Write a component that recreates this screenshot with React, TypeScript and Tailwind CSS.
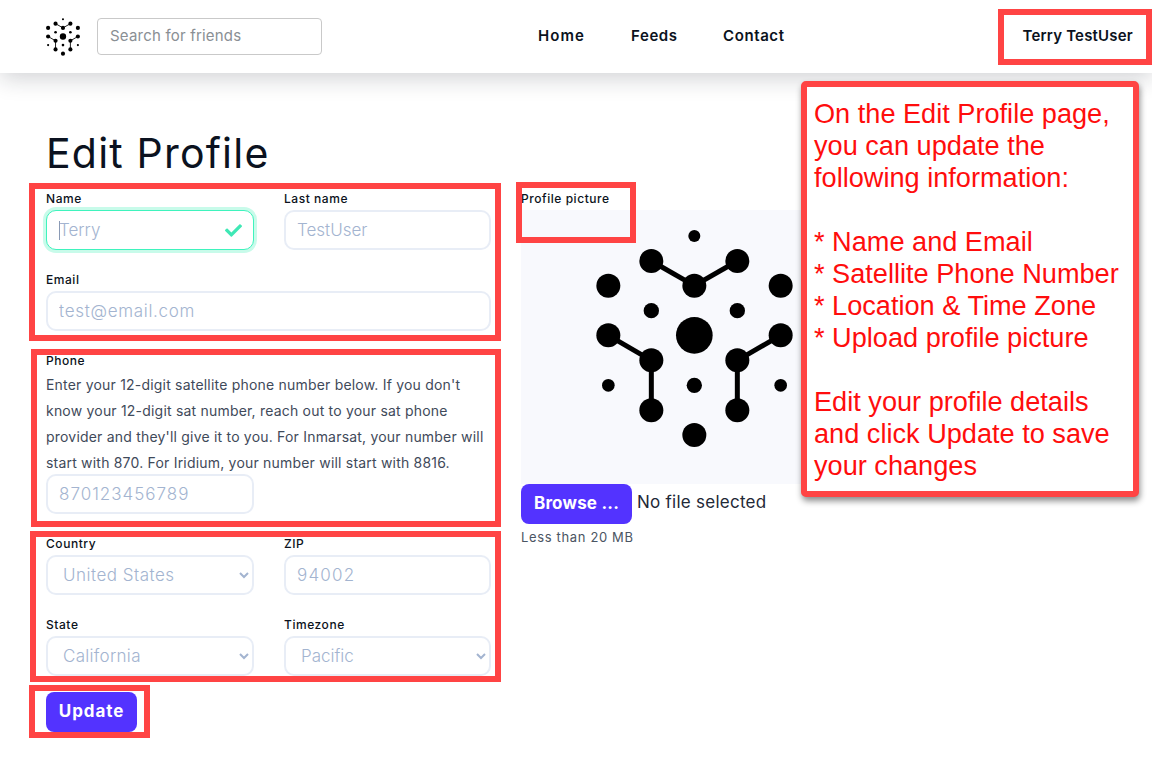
import { FaCheck } from 'react-icons/fa';

const FONT = 'font-["Inter",sans-serif]';
const fieldClass =
  'h-10 w-full rounded-[10px] border-2 border-[#e8edf6] bg-white px-[11px] text-[17px] font-light outline-none placeholder:text-[#a3b4d0]';
const selectClass =
  'h-10 w-full rounded-[10px] border-2 border-[#e8edf6] bg-white pl-[11px] pr-0 text-[17px] font-light text-[#a3b4d0] outline-none';
const labelClass = 'block h-[18px] text-[12px] font-medium leading-[14px] tracking-[0.55px] text-[#0b1220]';

const dots: [number, number, number][] = [
  [553, 183, 18], [424, 258, 36], [682, 258, 36], [553, 332, 36], [295, 332, 36], [812, 332, 36],
  [424, 407, 23], [682, 407, 23], [553, 481, 55], [295, 481, 36], [812, 481, 36], [424, 556, 36],
  [682, 556, 36], [295, 631, 19], [553, 631, 23], [812, 631, 19], [424, 706, 36], [682, 706, 36],
  [553, 780, 36],
];
const links: [number, number, number, number][] = [
  [424, 258, 553, 332], [682, 258, 553, 332], [295, 481, 424, 556], [812, 481, 682, 556],
  [424, 556, 424, 706], [682, 556, 682, 706],
];

function Logo({ viewBox, className }: { viewBox: string; className: string }) {
  return (
    <svg viewBox={viewBox} className={className} fill="#000">
      {links.map(([x1, y1, x2, y2], i) => (
        <line key={i} x1={x1} y1={y1} x2={x2} y2={y2} stroke="#000" strokeWidth="15" />
      ))}
      {dots.map(([cx, cy, r], i) => (
        <circle key={i} cx={cx} cy={cy} r={r} />
      ))}
    </svg>
  );
}

function Mark({ className }: { className: string }) {
  return <div className={`pointer-events-none absolute border-[6px] border-[#ff4444] ${className}`} />;
}

export default function App() {
  return (
    <div className={`relative h-[757px] w-[1152px] overflow-hidden bg-white ${FONT}`}>
      <header className="relative flex h-[73px] items-center bg-white pl-[45px] pr-[19px] shadow-[0_5px_22px_rgba(20,25,40,0.2)]">
        <Logo viewBox="255 160 597 660" className="h-[38px] w-[36px]" />
        <input
          placeholder="Search for friends"
          className="ml-4 h-[37px] w-[225px] rounded border border-[#c9c9c9] px-3 pb-[2px] text-[15px] tracking-[0.2px] outline-none placeholder:text-[#8a8f94]"
        />
        <nav className="ml-[216px] flex text-[15px] font-semibold text-[#0b1220]">
          <a className="w-[93px] tracking-[1.1px]">Home</a>
          <a className="w-[92px] tracking-[0.6px]">Feeds</a>
          <a className="tracking-[0.6px]">Contact</a>
        </nav>
        <span className="ml-auto text-[15px] font-semibold tracking-[0.2px] text-[#0b1220]">Terry TestUser</span>
      </header>

      <main className="flex pl-[46px] pt-[50px]">
        <div className="w-[445px]">
          <h1 className="mb-[9px] h-[60px] text-[41px] font-normal leading-[60px] tracking-[1.2px] text-[#0b1220]">
            Edit Profile
          </h1>

          <div className="grid grid-cols-[208px_207px] gap-x-[30px] gap-y-[23px]">
            <div>
              <label className={labelClass}>Name</label>
              <div className="relative">
                <input
                  placeholder="Terry"
                  className="h-10 w-full rounded-[10px] border border-[#3ff3bd] bg-white px-3 text-[17px] font-light shadow-[0_0_0_3px_#c8fbea] outline-none placeholder:text-[#a3b4d0]"
                />
                <span className="absolute left-[13px] top-[11px] h-[19px] w-px bg-[#8a9ab5]" />
                <FaCheck className="absolute right-[12px] top-[12px] text-[17px] text-[#3fe8b5]" />
              </div>
            </div>
            <div>
              <label className={labelClass}>Last name</label>
              <input placeholder="TestUser" className={fieldClass} />
            </div>
            <div className="col-span-2">
              <label className={labelClass}>Email</label>
              <input placeholder="test@email.com" className={`${fieldClass} tracking-[0.7px]`} />
            </div>
          </div>

          <div className="mt-[23px]">
            <label className={labelClass}>Phone</label>
            <p className="text-[14px] leading-[26px] tracking-[0.2px] text-[#3f4a5a]">
              Enter your 12-digit satellite phone number below. If you don't know your 12-digit sat number, reach out
              to your sat phone provider and they'll give it to you. For Inmarsat, your number will start with 870. For
              Iridium, your number will start with 8816.
            </p>
            <input placeholder="870123456789" className={`${fieldClass} -mt-[2px] !w-[208px] tracking-[1px]`} />
          </div>

          <div className="mt-[23px] grid grid-cols-[208px_207px] gap-x-[30px] gap-y-[23px]">
            <div>
              <label className={labelClass}>Country</label>
              <select className={`${selectClass} tracking-[0.5px]`}>
                <option>United States</option>
              </select>
            </div>
            <div>
              <label className={labelClass}>ZIP</label>
              <input placeholder="94002" className={`${fieldClass} tracking-[1.2px]`} />
            </div>
            <div>
              <label className={labelClass}>State</label>
              <select className={`${selectClass} tracking-[0.3px]`}>
                <option>California</option>
              </select>
            </div>
            <div>
              <label className={labelClass}>Timezone</label>
              <select className={selectClass}>
                <option>Pacific</option>
              </select>
            </div>
          </div>

          <button className="mt-4 h-10 w-[91px] rounded-lg bg-[#5333ff] text-[17px] font-bold tracking-[0.9px] text-white">
            Update
          </button>
        </div>

        <div className="ml-[30px] pt-[69px]">
          <label className={labelClass}>Profile picture</label>
          <div className="h-[274px] w-[346px] bg-[#f8f9fd]">
            <Logo viewBox="33 105 1038 822" className="h-full w-full" />
          </div>
          <div className="flex items-center">
            <button className="h-10 w-[111px] rounded-lg bg-[#5333ff] text-[17px] font-bold tracking-[0.2px] text-white">
              Browse ...
            </button>
            <span className="ml-[5px] -mt-[2px] text-[17px] tracking-[0.25px] text-[#1f2937]">No file selected</span>
          </div>
          <p className="mt-[5px] text-[13px] leading-4 tracking-[0.65px] text-[#4b5563]">Less than 20 MB</p>
        </div>
      </main>

      <Mark className="left-[29px] top-[183px] h-[158px] w-[472px]" />
      <Mark className="left-[31px] top-[349px] h-[178px] w-[470px]" />
      <Mark className="left-[30px] top-[531px] h-[151px] w-[471px]" />
      <Mark className="left-[29px] top-[685px] h-[53px] w-[121px]" />
      <Mark className="left-[516px] top-[182px] h-[61px] w-[120px]" />
      <Mark className="left-[998px] top-[9px] h-[56px] w-[154px]" />

      <aside className="absolute left-[801px] top-[81px] h-[416px] w-[338px] rounded-[5px] border-[6px] border-[#ff4444] bg-white pl-[7px] pt-[11px] font-['Liberation_Sans',sans-serif] text-[27.15px] leading-[32px] text-[#ff0d0d] shadow-[1px_4px_6px_rgba(0,0,0,0.45)]">
        <p>On the Edit Profile page,</p>
        <p>you can update the</p>
        <p>following information:</p>
        <p className="mt-8">* Name and Email</p>
        <p>* Satellite Phone Number</p>
        <p>* Location &amp; Time Zone</p>
        <p>* Upload profile picture</p>
        <p className="mt-8">Edit your profile details</p>
        <p>and click Update to save</p>
        <p>your changes</p>
      </aside>
    </div>
  );
}
